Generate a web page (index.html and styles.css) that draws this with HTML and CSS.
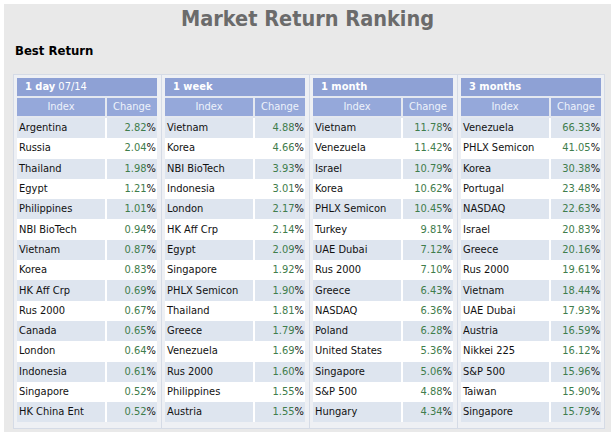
FILE: index.html
```html
<!DOCTYPE html>
<html>
<head>
<meta charset="utf-8">
<link rel="stylesheet" href="styles.css">
</head>
<body>
<div class="panel">
  <h1 class="title">Market Return Ranking</h1>
  <h2 class="subtitle">Best Return</h2>
  <div class="boards">
    <div class="board">
      <table class="rank">
        <colgroup><col class="c1"><col class="c2"></colgroup>
        <tr><th class="period" colspan="2"><b>1 day</b> 07/14</th></tr>
        <tr><th class="col idx">Index</th><th class="col">Change</th></tr>
        <tr class="alt"><td class="name">Argentina</td><td class="chg"><span>2.82</span>%</td></tr>
        <tr><td class="name">Russia</td><td class="chg"><span>2.04</span>%</td></tr>
        <tr class="alt"><td class="name">Thailand</td><td class="chg"><span>1.98</span>%</td></tr>
        <tr><td class="name">Egypt</td><td class="chg"><span>1.21</span>%</td></tr>
        <tr class="alt"><td class="name">Philippines</td><td class="chg"><span>1.01</span>%</td></tr>
        <tr><td class="name">NBI BioTech</td><td class="chg"><span>0.94</span>%</td></tr>
        <tr class="alt"><td class="name">Vietnam</td><td class="chg"><span>0.87</span>%</td></tr>
        <tr><td class="name">Korea</td><td class="chg"><span>0.83</span>%</td></tr>
        <tr class="alt"><td class="name">HK Aff Crp</td><td class="chg"><span>0.69</span>%</td></tr>
        <tr><td class="name">Rus 2000</td><td class="chg"><span>0.67</span>%</td></tr>
        <tr class="alt"><td class="name">Canada</td><td class="chg"><span>0.65</span>%</td></tr>
        <tr><td class="name">London</td><td class="chg"><span>0.64</span>%</td></tr>
        <tr class="alt"><td class="name">Indonesia</td><td class="chg"><span>0.61</span>%</td></tr>
        <tr><td class="name">Singapore</td><td class="chg"><span>0.52</span>%</td></tr>
        <tr class="alt"><td class="name">HK China Ent</td><td class="chg"><span>0.52</span>%</td></tr>
      </table>
    </div>
    <div class="board">
      <table class="rank">
        <colgroup><col class="c1"><col class="c2"></colgroup>
        <tr><th class="period" colspan="2"><b>1 week</b></th></tr>
        <tr><th class="col idx">Index</th><th class="col">Change</th></tr>
        <tr class="alt"><td class="name">Vietnam</td><td class="chg"><span>4.88</span>%</td></tr>
        <tr><td class="name">Korea</td><td class="chg"><span>4.66</span>%</td></tr>
        <tr class="alt"><td class="name">NBI BioTech</td><td class="chg"><span>3.93</span>%</td></tr>
        <tr><td class="name">Indonesia</td><td class="chg"><span>3.01</span>%</td></tr>
        <tr class="alt"><td class="name">London</td><td class="chg"><span>2.17</span>%</td></tr>
        <tr><td class="name">HK Aff Crp</td><td class="chg"><span>2.14</span>%</td></tr>
        <tr class="alt"><td class="name">Egypt</td><td class="chg"><span>2.09</span>%</td></tr>
        <tr><td class="name">Singapore</td><td class="chg"><span>1.92</span>%</td></tr>
        <tr class="alt"><td class="name">PHLX Semicon</td><td class="chg"><span>1.90</span>%</td></tr>
        <tr><td class="name">Thailand</td><td class="chg"><span>1.81</span>%</td></tr>
        <tr class="alt"><td class="name">Greece</td><td class="chg"><span>1.79</span>%</td></tr>
        <tr><td class="name">Venezuela</td><td class="chg"><span>1.69</span>%</td></tr>
        <tr class="alt"><td class="name">Rus 2000</td><td class="chg"><span>1.60</span>%</td></tr>
        <tr><td class="name">Philippines</td><td class="chg"><span>1.55</span>%</td></tr>
        <tr class="alt"><td class="name">Austria</td><td class="chg"><span>1.55</span>%</td></tr>
      </table>
    </div>
    <div class="board">
      <table class="rank">
        <colgroup><col class="c1"><col class="c2"></colgroup>
        <tr><th class="period" colspan="2"><b>1 month</b></th></tr>
        <tr><th class="col idx">Index</th><th class="col">Change</th></tr>
        <tr class="alt"><td class="name">Vietnam</td><td class="chg"><span>11.78</span>%</td></tr>
        <tr><td class="name">Venezuela</td><td class="chg"><span>11.42</span>%</td></tr>
        <tr class="alt"><td class="name">Israel</td><td class="chg"><span>10.79</span>%</td></tr>
        <tr><td class="name">Korea</td><td class="chg"><span>10.62</span>%</td></tr>
        <tr class="alt"><td class="name">PHLX Semicon</td><td class="chg"><span>10.45</span>%</td></tr>
        <tr><td class="name">Turkey</td><td class="chg"><span>9.81</span>%</td></tr>
        <tr class="alt"><td class="name">UAE Dubai</td><td class="chg"><span>7.12</span>%</td></tr>
        <tr><td class="name">Rus 2000</td><td class="chg"><span>7.10</span>%</td></tr>
        <tr class="alt"><td class="name">Greece</td><td class="chg"><span>6.43</span>%</td></tr>
        <tr><td class="name">NASDAQ</td><td class="chg"><span>6.36</span>%</td></tr>
        <tr class="alt"><td class="name">Poland</td><td class="chg"><span>6.28</span>%</td></tr>
        <tr><td class="name">United States</td><td class="chg"><span>5.36</span>%</td></tr>
        <tr class="alt"><td class="name">Singapore</td><td class="chg"><span>5.06</span>%</td></tr>
        <tr><td class="name">S&amp;P 500</td><td class="chg"><span>4.88</span>%</td></tr>
        <tr class="alt"><td class="name">Hungary</td><td class="chg"><span>4.34</span>%</td></tr>
      </table>
    </div>
    <div class="board">
      <table class="rank">
        <colgroup><col class="c1"><col class="c2"></colgroup>
        <tr><th class="period" colspan="2"><b>3 months</b></th></tr>
        <tr><th class="col idx">Index</th><th class="col">Change</th></tr>
        <tr class="alt"><td class="name">Venezuela</td><td class="chg"><span>66.33</span>%</td></tr>
        <tr><td class="name">PHLX Semicon</td><td class="chg"><span>41.05</span>%</td></tr>
        <tr class="alt"><td class="name">Korea</td><td class="chg"><span>30.38</span>%</td></tr>
        <tr><td class="name">Portugal</td><td class="chg"><span>23.48</span>%</td></tr>
        <tr class="alt"><td class="name">NASDAQ</td><td class="chg"><span>22.63</span>%</td></tr>
        <tr><td class="name">Israel</td><td class="chg"><span>20.83</span>%</td></tr>
        <tr class="alt"><td class="name">Greece</td><td class="chg"><span>20.16</span>%</td></tr>
        <tr><td class="name">Rus 2000</td><td class="chg"><span>19.61</span>%</td></tr>
        <tr class="alt"><td class="name">Vietnam</td><td class="chg"><span>18.44</span>%</td></tr>
        <tr><td class="name">UAE Dubai</td><td class="chg"><span>17.93</span>%</td></tr>
        <tr class="alt"><td class="name">Austria</td><td class="chg"><span>16.59</span>%</td></tr>
        <tr><td class="name">Nikkei 225</td><td class="chg"><span>16.12</span>%</td></tr>
        <tr class="alt"><td class="name">S&amp;P 500</td><td class="chg"><span>15.96</span>%</td></tr>
        <tr><td class="name">Taiwan</td><td class="chg"><span>15.90</span>%</td></tr>
        <tr class="alt"><td class="name">Singapore</td><td class="chg"><span>15.79</span>%</td></tr>
      </table>
    </div>
  </div>
</div>
</body>
</html>
```
FILE: styles.css
```css
html, body {
  margin: 0;
  padding: 0;
  background: #ffffff;
}
body {
  padding: 4px 4px 0 4px;
  font-family: "DejaVu Sans Condensed", "DejaVu Sans", sans-serif;
  color: #111;
  overflow: hidden;
  height: 432px;
  box-sizing: border-box;
}
.panel {
  background: #e9e9e9;
  height: 428px;
  padding: 0 0 0 9px;
  box-sizing: border-box;
}
.title {
  margin: 0;
  padding-top: 2px;
  height: 26px;
  text-align: center;
  font-size: 21.5px;
  font-weight: bold;
  color: #6b6b6b;
  line-height: 26px;
  padding-right: 9px;
}
.subtitle {
  margin: 0;
  padding: 9px 0 0 2px;
  height: 19px;
  font-size: 13px;
  line-height: 19px;
  font-weight: bold;
  color: #000;
}
.boards {
  margin-top: 14px;
  display: flex;
  width: 592px;
  border: 1px solid #d5dbe6;
  background: #eef0f4;
  box-sizing: border-box;
}
.board {
  padding: 3px 4px 6px 3px;
  border-right: 1px solid #d5dbe6;
}
.board:last-child {
  border-right: none;
}
.rank {
  width: 140px;
  border-collapse: separate;
  border-spacing: 0;
  font-size: 11px;
  table-layout: fixed;
}
.c1 {
  width: 90px;
}
.c2 {
  width: 50px;
}
.rank th {
  height: 18px;
  padding: 0;
  border-bottom: 2px solid #e4e8f0;
  line-height: 18px;
}
.period {
  background: #8ea1d5;
  color: #ffffff;
  text-align: left;
  padding-left: 8px !important;
  font-weight: normal;
}
.col {
  background: #95a8da;
  color: #eef2fb;
  font-weight: normal;
  text-align: center;
}
.col.idx {
  border-right: 2px solid #e4e8f0;
}
.rank td {
  height: 20.3px;
  padding: 0;
  line-height: 20px;
  background: #ffffff;
  white-space: nowrap;
  overflow: hidden;
}
.rank tr.alt td {
  background: #dee5ef;
}
.name {
  padding-left: 2px !important;
  border-right: 2px solid #ffffff;
  color: #111;
}
.chg {
  text-align: right;
  padding-right: 1px !important;
  color: #111;
}
.chg span {
  color: #3f7d4c;
}
```
